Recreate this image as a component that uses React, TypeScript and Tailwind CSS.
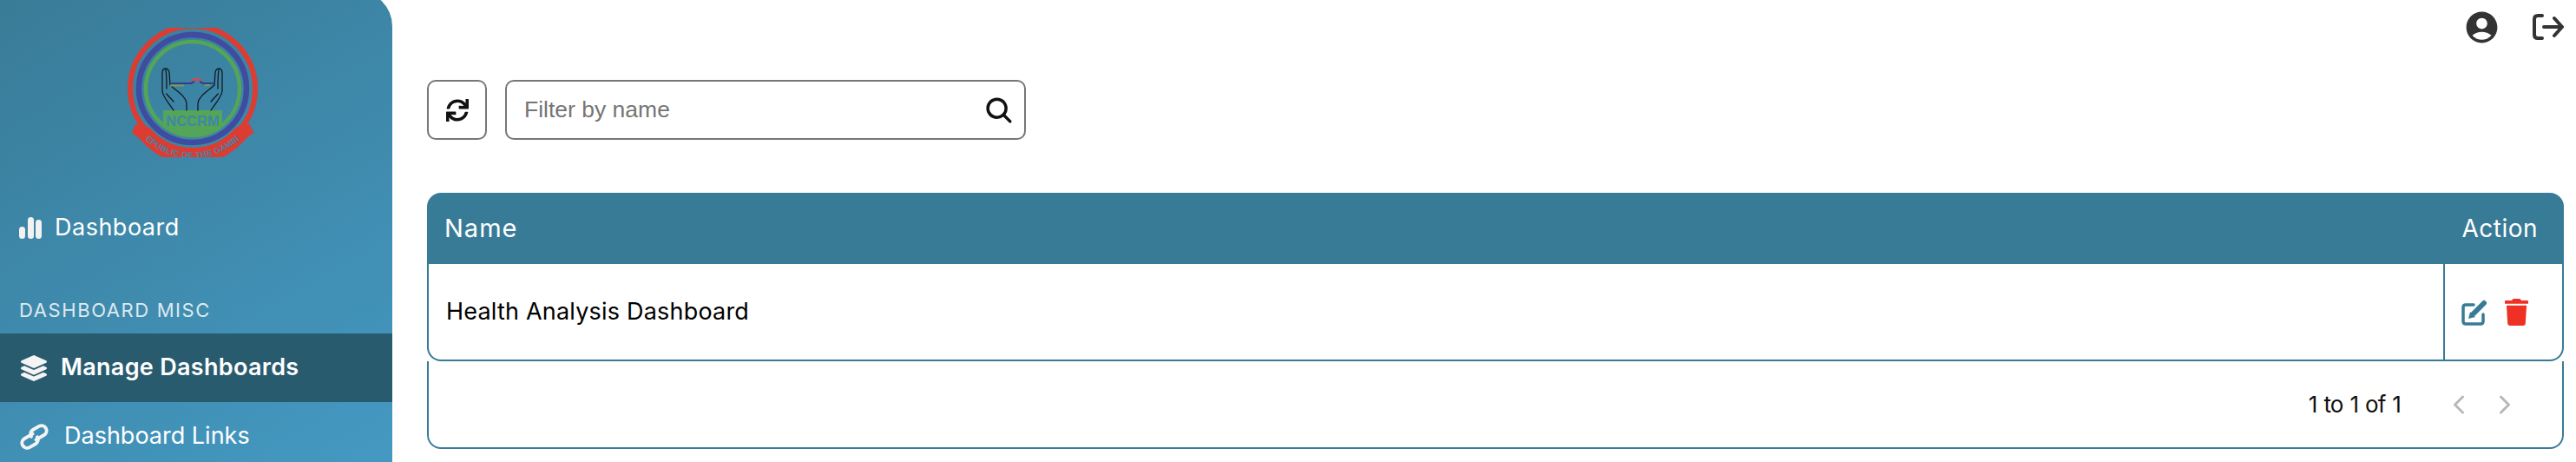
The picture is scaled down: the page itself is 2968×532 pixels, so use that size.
import { FaLayerGroup, FaSync, FaTrash } from 'react-icons/fa';
import { IoChevronBack, IoChevronForward, IoSearch } from 'react-icons/io5';
import { MdAccountCircle } from 'react-icons/md';

const Hand = () => (
	<g fill="none" stroke="#101a22" strokeWidth="1.3" strokeLinecap="round" strokeLinejoin="round">
		<path d="M58 95 C52 86 46 80 45 73 L45 52 C45 46 51 45 53 51 L54 66 C60 72 72 78 73 87 V95" />
		<path d="M49 48 C50 55 50 62 50 70" />
		<path d="M49.7 76 L58 85" />
	</g>
);

const Logo = () => (
	<svg viewBox="0 0 160 149" className="w-[160px] h-[149px]">
		<defs>
			<path id="ribbon-arc" d="M23 126 A80 80 0 0 0 137 126" />
		</defs>
		<circle cx="80" cy="70" r="72" fill="none" stroke="#dd3c33" strokeWidth="6" />
		<circle cx="80" cy="70" r="62" fill="none" stroke="#3f4c9f" strokeWidth="6.5" />
		<circle cx="80" cy="70" r="54" fill="none" stroke="#54a557" strokeWidth="4.5" />
		<path d="M46 95 H114 V114.5 A56 56 0 0 1 46 114.5 Z" fill="#54a557" />
		<text x="80" y="113" textAnchor="middle" fontFamily="'Liberation Sans', sans-serif" fontWeight="700" fontSize="16.5" fill="#3f86a8">NCCRM</text>
		<path d="M9.7 120.7 L14.7 110.7 L30 114.6 A65 65 0 0 0 130 114.6 L145.3 110.7 L150.3 120.7 L142 127 A95 95 0 0 1 115 149 H45 A95 95 0 0 1 18 127 Z" fill="#dd3c33" />
		<text fontFamily="'Liberation Sans', sans-serif" fontWeight="700" fontSize="9.5" fill="#3f86a8" letterSpacing="0.3">
			<textPath href="#ribbon-arc" startOffset="50%" textAnchor="middle">REPUBLIC OF THE GAMBIA</textPath>
		</text>
		<Hand />
		<g transform="translate(159,0) scale(-1,1)">
			<Hand />
		</g>
		<path d="M55 64 H78 L82 62 M88 62 L92 64 H105" fill="none" stroke="#2c3f94" strokeWidth="2" />
		<path d="M76 61 Q84 55 93 61 Z" fill="#d8464f" />
		<path d="M54 66.5 H70 M94 66 H100" stroke="#7d9a52" strokeWidth="1.8" />
	</svg>
);

const App = () => {
	return (
		<div className="flex w-[2968px] h-[532px] overflow-hidden bg-white font-['Inter','Liberation_Sans',sans-serif]">
			{/* 사이드바 */}
			<aside className="flex flex-col w-[452px] h-[542px] -mt-[10px] shrink-0 overflow-hidden rounded-tr-[40px] bg-[linear-gradient(150deg,#397b97_0%,#4499c2_100%)] text-white">
				<div className="flex justify-center shrink-0 h-[191px] pt-[42px] pr-[8px] overflow-hidden">
					<div className="h-[149px] overflow-hidden">
						<Logo />
					</div>
				</div>
				<div className="flex items-center gap-[15px] shrink-0 h-[80px] mt-[41px] pl-[22px]">
					<svg viewBox="0 0 26 25" className="w-[26px] h-[25px] text-[#f2f2f2]" fill="currentColor">
						<rect x="0" y="11" width="7" height="14" rx="3.5" />
						<rect x="10" y="0" width="7" height="25" rx="3.5" />
						<rect x="19" y="3" width="7" height="22" rx="3.5" />
					</svg>
					<span className="text-[27px] tracking-[0.5px]">Dashboard</span>
				</div>
				<div className="flex items-center shrink-0 h-[43px] mt-[34px] mb-[5px] pl-[22px] text-[22px] tracking-[1.6px] text-[#dfe9ee]">DASHBOARD MISC</div>
				<div className="flex items-center gap-[16px] shrink-0 h-[79px] pl-[24px] bg-[#295b6f] font-semibold">
					<FaLayerGroup className="w-[30px] h-[30px] text-[#f4f4f4]" />
					<span className="text-[27px] tracking-[0.3px]">Manage Dashboards</span>
				</div>
				<div className="flex items-center gap-[17px] shrink-0 h-[79px] pl-[22px]">
					<svg viewBox="0 0 36 28" className="w-[35px] h-[28px] overflow-visible text-[#f4f4f4]" fill="none" stroke="currentColor" strokeWidth="4" strokeLinecap="round">
						<g transform="rotate(-30 18 14)">
							<path d="M18 10 H7 a6 6 0 0 0 0 12 H15 a6 6 0 0 0 6 -6" />
							<path d="M18 18 H29 a6 6 0 0 0 0 -12 H21 a6 6 0 0 0 -6 6" />
						</g>
					</svg>
					<span className="text-[27px]">Dashboard Links</span>
				</div>
			</aside>

			<main className="flex-1 min-w-0 pl-[40px] pr-[14px]">
				<div className="flex justify-end items-center gap-[37px] h-[62px] text-[#333333]">
					<MdAccountCircle className="w-[43px] h-[43px]" />
					<svg viewBox="0 0 36 36" className="w-[36px] h-[36px]" fill="none" stroke="currentColor" strokeWidth="4" strokeLinecap="round" strokeLinejoin="round">
						<path d="M11 5 H6 Q2 5 2 9 V27 Q2 31 6 31 H11" />
						<path d="M13 18 H33 M25 8 L34 18 L25 28" />
					</svg>
				</div>

				{/* 검색 영역 */}
				<div className="flex gap-[21px] mt-[30px]">
					<button className="flex items-center justify-center w-[69px] h-[69px] rounded-[10px] border-2 border-[#777777]">
						<FaSync className="w-[26px] h-[26px] text-[#111111]" />
					</button>
					<div className="flex items-center justify-between w-[600px] h-[69px] pl-[20px] pr-[11px] rounded-[10px] border-2 border-[#777777]">
						<span className="pt-[1px] font-['Liberation_Sans',sans-serif] text-[26.5px] text-[#757575]">Filter by name</span>
						<IoSearch className="w-[36px] h-[36px] text-[#111111]" />
					</div>
				</div>

				{/* 테이블 */}
				<div className="mt-[61px]">
					<div className="flex items-center justify-between h-[82px] px-[20px] rounded-t-[16px] bg-[#387b97] text-white">
						<span className="text-[29px] tracking-[1px]">Name</span>
						<span className="mr-[10px] text-[28px] tracking-[0.5px]">Action</span>
					</div>
					<div className="flex h-[112px] rounded-b-[16px] border-2 border-t-0 border-[#387b97]">
						<div className="flex items-center flex-1 pl-[20px] text-[27px] text-black tracking-[0.2px]">Health Analysis Dashboard</div>
						<div className="flex items-center gap-[20px] w-[137px] pl-[19px] border-l-2 border-[#387b97]">
							<svg viewBox="0 0 30 31" className="w-[30px] h-[31px] text-[#387b97]" fill="none" stroke="currentColor">
								<path d="M14 7 H5 Q2 7 2 10 V26 Q2 29 5 29 H22 Q25 29 25 26 V18" strokeWidth="3.5" strokeLinecap="round" />
								<path d="M14 17 L26 5" strokeWidth="6" strokeLinecap="round" />
								<path d="M8 23 L10 15 L16 21 Z" fill="currentColor" stroke="none" />
							</svg>
							<FaTrash className="w-[27px] h-[31px] text-[#ee3124]" />
						</div>
					</div>
					<div className="flex items-center justify-end h-[101px] pr-[50px] rounded-b-[16px] border-2 border-t-0 border-[#387b97]">
						<span className="text-[26px] text-[#111111] tracking-[-0.9px] [word-spacing:1.5px]">1 to 1 of 1</span>
						<IoChevronBack className="ml-[51px] w-[32px] h-[32px] text-[#b8b8b8]" />
						<IoChevronForward className="ml-[21px] w-[32px] h-[32px] text-[#b8b8b8]" />
					</div>
				</div>
			</main>
		</div>
	);
};

export default App;
